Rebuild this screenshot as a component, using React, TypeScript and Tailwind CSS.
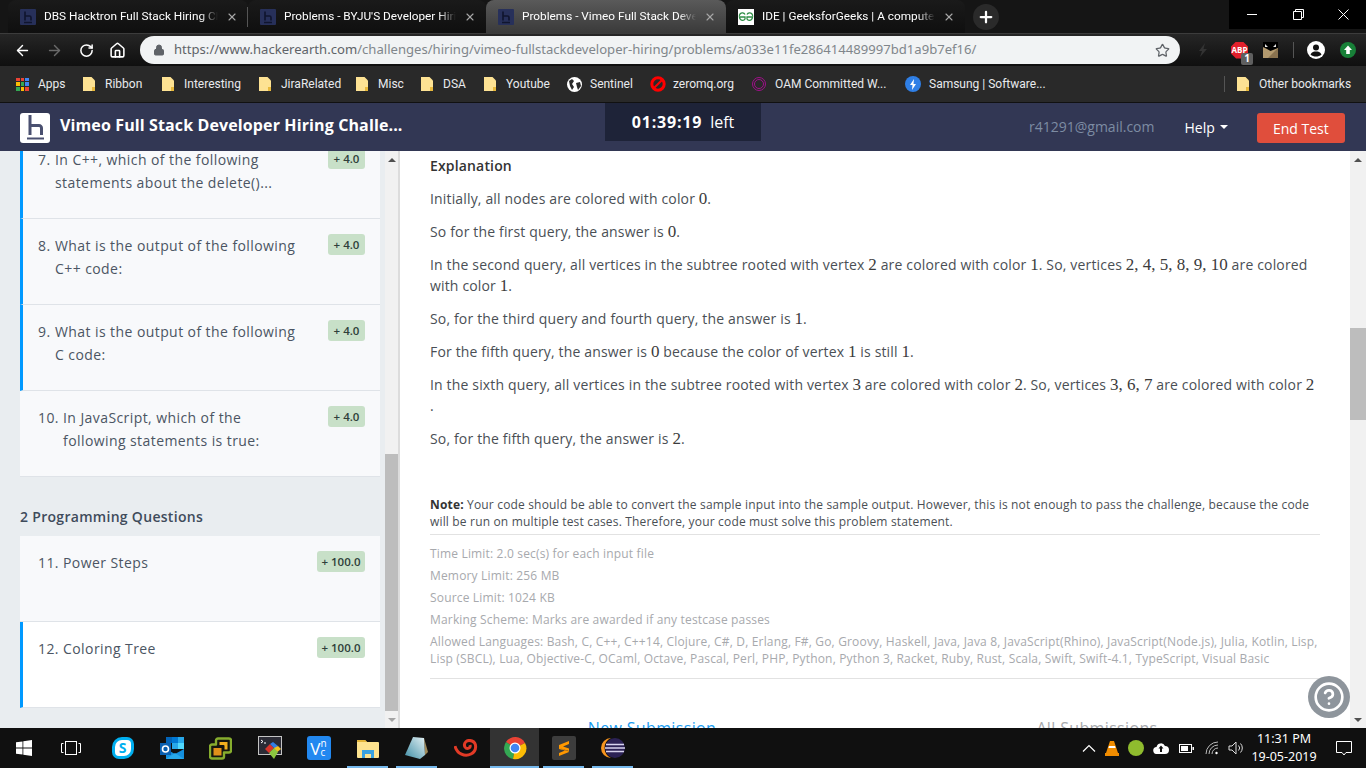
import { ReactNode } from "react";
import { ArrowLeft, ArrowRight, RotateCw, Home, Lock, Star, X, Plus, HelpCircle } from "lucide-react";

const folder = (
  <svg width="12" height="14" viewBox="0 0 12 14" className="shrink-0">
    <path d="M0 0h8.500l3.500 3.500V14H0z" fill="#fde293" />
    <path d="M9 10h3v4H9z" fill="#e8b93c" />
  </svg>
);

// favicon of hackerearth, dark square with h
function HeFavicon() {
  return (
    <svg width="16" height="16" viewBox="0 0 16 16" className="shrink-0">
      <rect width="16" height="16" rx="1" fill="#27305a" />
      <path d="M5 2.500v9M5 7h4.500a1.500 1.500 0 0 1 1.500 1.500v3M4 13.500h8" stroke="#10152e" strokeWidth="1.600" fill="none" />
    </svg>
  );
}

function GfgFavicon() {
  return (
    <svg width="16" height="16" viewBox="0 0 16 16" className="shrink-0">
      <rect width="16" height="16" fill="#fff" />
      <path d="M7 5.500C6 3.600 3.600 3.300 2.200 4.800.9 6.300 1.200 9 2.500 10.500c1.400 1.400 3.500 1.200 4.500-.5V8H2M9 5.500c1-1.900 3.400-2.200 4.800-.7 1.300 1.500 1 4.200-.3 5.700-1.400 1.400-3.500 1.200-4.500-.5V8h5" fill="none" stroke="#2f8d46" strokeWidth="1.300" />
    </svg>
  );
}

type TabProps = { title: string; active?: boolean; width: string; icon: ReactNode; divider?: boolean };

function Tab({ title, active, width, icon, divider }: TabProps) {
  return (
    <div className={`relative flex h-[33px] items-center gap-[8px] rounded-t-[8px] pl-[12px] pr-[10px] ${width} ${active ? "bg-gradient-to-b from-[#5a5a5a] to-[#3a3a3a]" : "bg-gradient-to-b from-[#1a1a1a] to-[#0f0f0f]"}`}>
      {icon}
      <span className="flex-1 overflow-hidden text-[11.8px] whitespace-nowrap text-white [mask-image:linear-gradient(to_right,black_90%,transparent)]">{title}</span>
      <X size={12} strokeWidth={2.2} className="shrink-0 text-[#a8a8a8]" />
      {divider && <div className="absolute top-[7px] right-0 h-[20px] w-px bg-[#555]" />}
    </div>
  );
}

type BookmarkProps = { label: string; width: string; icon: ReactNode; gap?: string };

function Bookmark({ label, width, icon, gap = "gap-[10px]" }: BookmarkProps) {
  return (
    <div className={`flex shrink-0 items-center text-[12px] whitespace-nowrap text-[#e8eaed] ${gap} ${width}`}>
      {icon}
      <span>{label}</span>
    </div>
  );
}

function AppsGrid() {
  const colors = ["#ea4335", "#ea4335", "#4285f4", "#fbbc05", "#34a853", "#4285f4", "#34a853", "#fbbc05", "#ea4335"];
  return (
    <div className="grid h-[13px] w-[13px] shrink-0 grid-cols-3 gap-px">
      {colors.map((c, i) => (
        <div key={i} style={{ backgroundColor: c }} />
      ))}
    </div>
  );
}

function Scrollbar({ before, thumb, className, downArrow }: { before: string; thumb: string; className: string; downArrow: string }) {
  return (
    <div className={`flex flex-col bg-[#f1f1f1] ${className}`}>
      <div className="flex h-[17px] shrink-0 items-center justify-center">
        <div className="h-0 w-0 border-x-[4px] border-b-[4px] border-x-transparent border-b-[#505050]" />
      </div>
      <div className={`shrink-0 ${before}`} />
      <div className={`shrink-0 bg-[#bdbdbd] ${thumb}`} />
      <div className="flex-1" />
      <div className="flex h-[17px] shrink-0 items-center justify-center">
        <div className={`h-0 w-0 border-x-[4px] border-t-[4px] border-x-transparent ${downArrow}`} />
      </div>
    </div>
  );
}

type QuestionProps = { num: string; lines: [string, string?]; marks: string; indent: string; plain?: boolean; white?: boolean; badgeWidth?: string };

function Question({ num, lines, marks, indent, plain, white, badgeWidth = "w-[37px]" }: QuestionProps) {
  return (
    <div className={`flex h-[86px] border-b border-[#dfe3e8] pt-[15px] pr-[15px] ${plain ? "pl-[18px]" : "border-l-[3px] border-l-[#0099ff] pl-[15px]"} ${white ? "bg-white" : "bg-[#f8f9fb]"}`}>
      <div className="flex flex-1 text-[14px] leading-[23px] tracking-[0.42px] text-[#4b5563]">
        <span className={`shrink-0 ${indent}`}>{num}</span>
        <div>
          <div>{lines[0]}</div>
          {lines[1] && <div>{lines[1]}</div>}
        </div>
      </div>
      <div className={`flex h-[21px] shrink-0 items-center justify-center rounded-[3px] bg-[#c8e0c8] pt-px text-[11.5px] font-semibold text-[#2f3f3a] ${badgeWidth}`}>{marks}</div>
    </div>
  );
}

const M = ({ children }: { children: ReactNode }) => (
  <span className="font-['Liberation_Serif',serif] text-[17px] tracking-normal text-[#3b3b3b]">{children}</span>
);

const languages =
  "Allowed Languages: Bash, C, C++, C++14, Clojure, C#, D, Erlang, F#, Go, Groovy, Haskell, Java, Java 8, JavaScript(Rhino), JavaScript(Node.js), Julia, Kotlin, Lisp, Lisp (SBCL), Lua, Objective-C, OCaml, Octave, Pascal, Perl, PHP, Python, Python 3, Racket, Ruby, Rust, Scala, Swift, Swift-4.1, TypeScript, Visual Basic";

function TaskIcon({ children, width = "w-[49px]", lit, active }: { children: ReactNode; width?: string; lit?: boolean; active?: boolean }) {
  return (
    <div className={`relative flex h-[40px] shrink-0 items-center justify-center ${width} ${active ? "bg-[#333]" : ""}`}>
      {children}
      {lit && <div className={`absolute bottom-0 h-[2px] bg-[#76b9ed] ${active ? "inset-x-0" : "inset-x-[4px]"}`} />}
    </div>
  );
}

export default function App() {
  return (
    <div className="relative flex h-[768px] w-[1366px] flex-col overflow-hidden bg-white font-['Open_Sans',sans-serif]">
      {/* tab strip */}
      <div className="flex h-[33px] shrink-0 bg-[#151515] pl-[8px] font-['Roboto',sans-serif]">
        <Tab title="DBS Hacktron Full Stack Hiring Ch" width="w-[240px]" icon={<HeFavicon />} divider />
        <Tab title="Problems - BYJU'S Developer Hirin" width="w-[238px]" icon={<HeFavicon />} />
        <Tab title="Problems - Vimeo Full Stack Devel" width="w-[240px]" icon={<HeFavicon />} active />
        <Tab title="IDE | GeeksforGeeks | A computer" width="w-[239px]" icon={<GfgFavicon />} />
        <div className="ml-[1px] flex h-[33px] w-[40px] items-center justify-center">
          <div className="flex h-[26px] w-[26px] items-center justify-center rounded-full bg-[#2a2a2a]">
            <Plus size={18} strokeWidth={3} className="text-white" />
          </div>
        </div>
        <div className="flex-1" />
        <div className="flex h-[29px] w-[137px] items-center bg-black">
          <div className="flex w-[46px] justify-center">
            <svg width="10" height="1"><rect width="10" height="1" fill="#fff" /></svg>
          </div>
          <div className="flex w-[46px] justify-center">
            <svg width="11" height="11" viewBox="0 0 11 11" fill="none" stroke="#fff"><path d="M.5 2.500h8v8h-8zM2.500 2.500v-2h8v8h-2" /></svg>
          </div>
          <div className="flex w-[45px] justify-center">
            <svg width="11" height="11" viewBox="0 0 11 11" fill="none" stroke="#fff"><path d="M.5.500l10 10M10.500.500l-10 10" /></svg>
          </div>
        </div>
      </div>

      {/* toolbar */}
      <div className="flex h-[33px] shrink-0 items-center border-t border-[#3c3c3c] bg-gradient-to-b from-[#262626] to-[#0f0f0f] pl-[14px]">
        <ArrowLeft size={17} strokeWidth={2} className="text-white" />
        <ArrowRight size={17} strokeWidth={2} className="ml-[15px] text-[#6a6a6a]" />
        <RotateCw size={15} strokeWidth={2.4} className="ml-[16px] text-white" />
        <Home size={17} strokeWidth={2.2} className="ml-[15px] text-white" />
        <div className="ml-[14px] flex h-[28px] w-[1040px] items-center rounded-full bg-[#f1f3f4] pr-[10px] pl-[13px] font-['Noto_Sans',sans-serif] text-[13.1px]">
          <Lock size={12} fill="#5f6368" className="text-[#5f6368]" />
          <span className="ml-[9px] text-[#5f6368]">https://www.hackerearth.com</span>
          <span className="text-[#80868b]">/challenges/hiring/vimeo-fullstackdeveloper-hiring/problems/a033e11fe286414489997bd1a9b7ef16/</span>
          <div className="flex-1" />
          <Star size={15} strokeWidth={2} className="text-[#5f6368]" />
        </div>
        <svg width="10" height="14" viewBox="0 0 10 14" className="ml-[18px]"><path d="M7 0 1 8h3l-2 6 7-8H5.500z" fill="#333" /></svg>
        <div className="relative ml-[23px] flex h-[17px] w-[17px] items-center justify-center bg-[#e2202c] text-[8px] font-bold text-white [clip-path:polygon(30%_0,70%_0,100%_30%,100%_70%,70%_100%,30%_100%,0_70%,0_30%)]">
          ABP
        </div>
        <div className="relative -ml-[7px] mt-[17px] flex h-[12px] w-[12px] shrink-0 items-center justify-center rounded-[2px] bg-[#5f5f5f] text-[10px] font-bold text-white">1</div>
        <svg width="15" height="16" viewBox="0 0 15 16" className="ml-[10px]">
          <rect width="15" height="16" fill="#000" />
          <path d="M0 5l4 2 3.500 2 7.500-3v10H0z" fill="#b39a6f" />
          <path d="M15 6v10H5z" fill="#8a7350" />
          <path d="M2 2l3 3H2zM13 2l-3 3h3z" fill="#e8e8e8" />
        </svg>
        <div className="ml-[15px] h-[16px] w-px bg-[#555]" />
        <svg width="18" height="18" viewBox="0 0 18 18" className="ml-[13px]">
          <circle cx="9" cy="9" r="9" fill="#fff" />
          <circle cx="9" cy="6.500" r="3" fill="#111" />
          <path d="M3.500 13.500c1-2.500 3.500-3 5.500-3s4.500.5 5.500 3c-1.500 1.500-3.500 2-5.500 2s-4-.5-5.500-2z" fill="#111" />
        </svg>
        <svg width="16" height="16" viewBox="0 0 16 16" className="ml-[15px]">
          <circle cx="8" cy="8" r="8" fill="#188038" />
          <path d="M8 3.500 12 8H9.800v4H6.200V8H4z" fill="#fff" />
        </svg>
      </div>

      {/* bookmarks */}
      <div className="flex h-[37px] shrink-0 items-center border-b border-[#111] bg-[#292929] pl-[16px] font-['Roboto',sans-serif]">
        <Bookmark label="Apps" width="w-[67px]" icon={<AppsGrid />} gap="gap-[9px]" />
        <Bookmark label="Ribbon" width="w-[79px]" icon={folder} />
        <Bookmark label="Interesting" width="w-[97px]" icon={folder} />
        <Bookmark label="JiraRelated" width="w-[97px]" icon={folder} />
        <Bookmark label="Misc" width="w-[65px]" icon={folder} />
        <Bookmark label="DSA" width="w-[63px]" icon={folder} />
        <Bookmark label="Youtube" width="w-[83px]" icon={folder} />
        <Bookmark
          label="Sentinel"
          width="w-[83px]"
          gap="gap-[8px]"
          icon={
            <svg width="15" height="15" viewBox="0 0 15 15">
              <circle cx="7.500" cy="7.500" r="7.500" fill="#fff" />
              <path d="M2 4l3-2 2 2-2 3 2 3-2 3-2-4zM9 6l4-1 1 4-3 4-1-3z" fill="#292929" />
            </svg>
          }
        />
        <Bookmark
          label="zeromq.org"
          width="w-[102px]"
          gap="gap-[7px]"
          icon={
            <svg width="16" height="16" viewBox="0 0 16 16">
              <circle cx="8" cy="8" r="6.200" fill="none" stroke="#f00" strokeWidth="3" />
              <path d="M3 13 13 3" stroke="#f00" strokeWidth="2" />
            </svg>
          }
        />
        <Bookmark
          label="OAM Committed W..."
          width="w-[153px]"
          gap="gap-[9px]"
          icon={<div className="h-[14px] w-[14px] rounded-full border-[3px] border-double border-[#a0108a]" />}
        />
        <Bookmark
          label="Samsung | Software..."
          width="w-[319px]"
          gap="gap-[8px]"
          icon={
            <div className="flex h-[16px] w-[16px] items-center justify-center rounded-full bg-[#2f7fe6]">
              <svg width="8" height="11" viewBox="0 0 8 11"><path d="M5 0 1 6h2.500L3 11l4-6H4.500z" fill="#fff" /></svg>
            </div>
          }
        />
        <div className="h-[16px] w-px bg-[#555]" />
        <Bookmark label="Other bookmarks" width="ml-[12px] w-[120px]" icon={folder} />
      </div>

      {/* app header */}
      <div className="relative z-10 flex h-[48px] shrink-0 bg-[#323754]">
        <svg width="30" height="30" viewBox="0 0 30 30" className="mt-[10px] ml-[20px] shrink-0">
          <rect width="30" height="30" rx="3" fill="#fff" />
          <path d="M10 2v20M10 12.500h9a2.500 2.500 0 0 1 2.500 2.500v7" fill="none" stroke="#4a5070" strokeWidth="3" />
          <path d="M7 25.500h17" stroke="#4a5070" strokeWidth="2" />
        </svg>
        <div className="ml-[10px] w-[545px] pt-[8px] text-[16px] leading-[28px] font-bold tracking-[0.12px] whitespace-nowrap text-white">Vimeo Full Stack Developer Hiring Challe...</div>
        <div className="flex h-[38px] w-[156px] items-center justify-center gap-[8px] bg-[#1e2338] text-[16px] text-white">
          <span className="font-bold tracking-[0.8px]">01:39:19</span>
          <span>left</span>
        </div>
        <div className="ml-[268px] pt-[14px] text-[14px] leading-[20px] text-[#7d8ca3]">r41291@gmail.com</div>
        <div className="ml-[30px] flex h-[48px] items-center gap-[5px] text-[14px] text-white">
          <span>Help</span>
          <div className="h-0 w-0 border-x-[4px] border-t-[4px] border-x-transparent border-t-white" />
        </div>
        <div className="mt-[10px] ml-[29px] flex h-[30px] w-[88px] items-center justify-center rounded-[3px] bg-[#e04e3c] text-[14px] text-white">End Test</div>
      </div>

      {/* body */}
      <div className="flex min-h-0 flex-1">
        <div className="flex w-[400px] shrink-0 bg-[#e9edf0]">
          <div className="w-[380px] shrink-0 overflow-hidden pl-[20px]">
            <div className="-mt-[18px]">
              <Question num="7." indent="w-[17px]" lines={["In C++, which of the following", "statements about the delete()..."]} marks="+ 4.0" />
              <Question num="8." indent="w-[17px]" lines={["What is the output of the following", "C++ code:"]} marks="+ 4.0" />
              <Question num="9." indent="w-[17px]" lines={["What is the output of the following", "C code:"]} marks="+ 4.0" />
              <Question num="10." indent="w-[25px]" lines={["In JavaScript, which of the", "following statements is true:"]} marks="+ 4.0" plain />
            </div>
            <div className="pt-[30px] pb-[9px] text-[14px] leading-[20px] font-semibold tracking-[0.3px] text-[#3f4b5b]">2 Programming Questions</div>
            <Question num="11." indent="w-[25px]" lines={["Power Steps"]} marks="+ 100.0" plain badgeWidth="w-[48px]" />
            <Question num="12." indent="w-[25px]" lines={["Coloring Tree"]} marks="+ 100.0" white badgeWidth="w-[48px]" />
          </div>
          <div className="w-[5px] shrink-0" />
          <Scrollbar className="w-[15px] shrink-0 border-r-2 border-[#dcdcdc]" before="h-[286px]" thumb="h-[257px]" downArrow="border-t-[#a3a3a3]" />
        </div>

        <div className="w-[950px] shrink-0 overflow-hidden px-[30px] text-[14px] leading-[21px] tracking-[0.16px] text-[#4a4f55]">
          <div className="w-[890px] pt-[4px]">
            <p className="mb-[12px] font-semibold text-[#333]">Explanation</p>
            <p className="mb-[12px]">Initially, all nodes are colored with color <M>0</M>.</p>
            <p className="mb-[12px]">So for the first query, the answer is <M>0</M>.</p>
            <p className="mb-[12px]">In the second query, all vertices in the subtree rooted with vertex <M>2</M> are colored with color <M>1</M>. So, vertices <M>2, 4, 5, 8, 9, 10</M> are colored with color <M>1</M>.</p>
            <p className="mb-[12px]">So, for the third query and fourth query, the answer is <M>1</M>.</p>
            <p className="mb-[12px]">For the fifth query, the answer is <M>0</M> because the color of vertex <M>1</M> is still <M>1</M>.</p>
            <p className="mb-[12px]">In the sixth query, all vertices in the subtree rooted with vertex <M>3</M> are colored with color <M>2</M>. So, vertices <M>3, 6, 7</M> are colored with color <M>2</M><br />.</p>
            <p>So, for the fifth query, the answer is <M>2</M>.</p>

            <p className="mt-[47px] border-b border-[#e2e2e2] pb-[4px] text-[12px] leading-[17px] tracking-[0.17px] text-[#4a4f55]">
              <span className="font-bold text-[#333]">Note:</span> Your code should be able to convert the sample input into the sample output. However, this is not enough to pass the challenge, because the code will be run on multiple test cases. Therefore, your code must solve this problem statement.
            </p>
            <div className="border-b border-[#e2e2e2] pt-[10px] pb-[11px] text-[12px] leading-[17px] tracking-[0.17px] text-[#a7a9ad]">
              <p className="mb-[5px]">Time Limit: 2.0 sec(s) for each input file</p>
              <p className="mb-[5px]">Memory Limit: 256 MB</p>
              <p className="mb-[5px]">Source Limit: 1024 KB</p>
              <p className="mb-[5px]">Marking Scheme: Marks are awarded if any testcase passes</p>
              <p>{languages}</p>
            </div>
            <div className="flex pt-[38px] text-[16px] leading-[22px] tracking-[0.35px]">
              <div className="w-[444px] text-center text-[#1a9cf0]">New Submission</div>
              <div className="w-[446px] text-center text-[#a7a9ad]">All Submissions</div>
            </div>
          </div>
        </div>
        <Scrollbar className="w-[16px] shrink-0" before="h-[160px]" thumb="h-[92px]" downArrow="border-t-[#505050]" />
      </div>

      {/* help bubble */}
      <div className="absolute top-[676px] left-[1308px] flex h-[42px] w-[42px] items-center justify-center rounded-full bg-[#8e959c]">
        <HelpCircle size={32} strokeWidth={2} className="text-white" />
      </div>

      {/* taskbar */}
      <div className="flex h-[40px] shrink-0 items-center bg-[#101010]">
        <TaskIcon width="w-[48px]">
          <svg width="16" height="16" viewBox="0 0 16 16"><path d="M0 2.300 6.500 1.400V7.600H0zM7.300 1.300 16 0V7.600H7.300zM0 8.400H6.500V14.600L0 13.700zM7.300 8.400H16V16L7.300 14.700z" fill="#fff" /></svg>
        </TaskIcon>
        <TaskIcon width="w-[46px]">
          <svg width="20" height="14" viewBox="0 0 20 14" fill="none" stroke="#fff"><rect x="4.500" y="0.500" width="11" height="13" /><path d="M2.500 2.500h-2v9h2M17.500 2.500h2v9h-2" /></svg>
        </TaskIcon>
        <div className="w-[4px] shrink-0" />
        <TaskIcon>
          <div className="flex h-[22px] w-[22px] items-center justify-center rounded-tl-[10px] rounded-tr-[7px] rounded-br-[10px] rounded-bl-[7px] border-[3px] border-[#00aff0] bg-white text-[14px] leading-none font-bold text-[#00aff0]">S</div>
        </TaskIcon>
        <TaskIcon>
          <svg width="24" height="22" viewBox="0 0 24 22">
            <path d="M6 0h6v6H6z" fill="#0364b8" />
            <path d="M12 0h6v6h-6z" fill="#0078d4" />
            <path d="M18 0h6v6h-6z" fill="#28a8ea" />
            <path d="M12 6h6v6h-6z" fill="#28a8ea" />
            <path d="M18 6h6v6h-6z" fill="#50d9ff" />
            <path d="M6 12 15 17l9-5v10H6z" fill="#1490df" />
            <path d="M6 22 15 16l9 6z" fill="#28a8ea" />
            <rect x="0" y="6" width="11" height="12" fill="#0a5fb0" />
            <circle cx="5.500" cy="12" r="3" fill="none" stroke="#fff" strokeWidth="1.600" />
          </svg>
        </TaskIcon>
        <TaskIcon>
          <svg width="23" height="23" viewBox="0 0 23 23">
            <path d="M9 1.500h11a2 2 0 0 1 2 2v10a2 2 0 0 1-2 2h-5v4a2 2 0 0 1-2 2H3a2 2 0 0 1-2-2v-10a2 2 0 0 1 2-2h4v-4a2 2 0 0 1 2-2z" fill="#15170f" stroke="#86ad2e" strokeWidth="2.400" strokeLinejoin="round" />
            <path d="M10.500 5h8v7.500h-3V9a1 1 0 0 0-1-1h-4z" fill="#f2b01e" />
            <path d="M4.500 11h8v7.500h-8z" fill="#e0901a" />
          </svg>
        </TaskIcon>
        <TaskIcon>
          <svg width="24" height="24" viewBox="0 0 24 24">
            <rect x="0.500" y="0.500" width="23" height="18" fill="#2b2b35" stroke="#c4c4c4" />
            <path d="M3 4l2 1.500L3 7M6 7h2" stroke="#fff" fill="none" />
            <path d="M7 13l5-5 4 4-5 5z" fill="#d9342b" />
            <path d="M12 8l3-2 5 4-3 3z" fill="#2f7fe6" />
            <path d="M16 12l4-2 3 3-5 4z" fill="#f2c11e" />
            <path d="M11 17l5-5 4 4-4 7z" fill="#8cc63f" />
          </svg>
        </TaskIcon>
        <TaskIcon>
          <div className="flex h-[24px] w-[24px] items-center justify-center rounded-[3px] bg-[#2288f0] leading-none text-white">
            <span className="text-[17px]">V</span>
            <span className="flex flex-col text-[10px] leading-[9px]">
              <span>n</span>
              <span>c</span>
            </span>
          </div>
        </TaskIcon>
        <TaskIcon lit>
          <svg width="22" height="19" viewBox="0 0 22 19">
            <path d="M0 2a1 1 0 0 1 1-1h7l2 2h11a1 1 0 0 1 1 1v14a1 1 0 0 1-1 1H1a1 1 0 0 1-1-1z" fill="#fde38f" />
            <path d="M0 2a1 1 0 0 1 1-1h7l2 2H0z" fill="#e3b53a" />
            <path d="M5 19v-8h12v8h-3v-4H8v4z" fill="#3aa2e0" />
          </svg>
        </TaskIcon>
        <TaskIcon lit>
          <svg width="23" height="22" viewBox="0 0 23 22">
            <defs>
              <linearGradient id="pad" x1="0" y1="1" x2="1" y2="0">
                <stop offset="0" stopColor="#3f8ea6" />
                <stop offset="1" stopColor="#e4f1f4" />
              </linearGradient>
            </defs>
            <path d="M19 1l4 14-3 3z" fill="#a08a5a" />
            <path d="M8 0l11 1 1 17-5 4-15-4z" fill="url(#pad)" />
          </svg>
        </TaskIcon>
        <TaskIcon>
          <svg width="24" height="19" viewBox="0 0 24 19" fill="none">
            <path d="M1 7c2 8 10 11 16 8 6-3 6-11 1-13C13 0 9 4 11 8c2 3 6 1 5-2" stroke="#e23a26" strokeWidth="3" />
          </svg>
        </TaskIcon>
        <TaskIcon lit active>
          <svg width="24" height="24" viewBox="0 0 24 24">
            <path d="M12 12 3 6a11 11 0 0 1 19 1z" fill="#ea4335" />
            <path d="M12 12 3 6a11 11 0 0 0 7 17z" fill="#34a853" />
            <path d="M12 12 22 7a11 11 0 0 1-12 16z" fill="#fbbc05" />
            <circle cx="12" cy="12" r="5.500" fill="#fff" />
            <circle cx="12" cy="12" r="4.300" fill="#4285f4" />
          </svg>
        </TaskIcon>
        <TaskIcon lit>
          <div className="flex h-[24px] w-[24px] items-center justify-center rounded-[2px] bg-[#3d3d3d]">
            <svg width="12" height="16" viewBox="0 0 12 16"><path d="M11 1 1 5v3l10 3.500V8.500L5 6.500l6-2.500zM1 8l10 3v1L1 16v-3l6-2.500L1 9z" fill="#ff9800" /></svg>
          </div>
        </TaskIcon>
        <TaskIcon lit>
          <svg width="24" height="24" viewBox="0 0 24 24">
            <path d="M10 2a10 10 0 0 0 0 20 11 11 0 0 1 0-20z" fill="#f7941e" />
            <circle cx="14" cy="12" r="10" fill="#2c2255" />
            <path d="M5 8.500h18M4 12h20M5 15.500h18" stroke="#d8d4ee" strokeWidth="1.500" />
          </svg>
        </TaskIcon>

        <div className="flex-1" />

        <div className="flex items-center text-white">
          <svg width="14" height="8" viewBox="0 0 14 8" fill="none" stroke="#fff" strokeWidth="1.200"><path d="M1 7.500 7 1.500l6 6" /></svg>
          <svg width="14" height="16" viewBox="0 0 14 16" className="ml-[9px]"><path d="M5 1h4l4 12H1z" fill="#f08c00" /><path d="M4 6h6l.6 2H3.400z" fill="#fff" /><path d="M0 13h14v3H0z" fill="#f08c00" /></svg>
          <div className="ml-[9px] h-[16px] w-[16px] rounded-full bg-[#8fbc2e]" />
          <svg width="16" height="12" viewBox="0 0 16 12" className="ml-[9px]"><path d="M4 12a3.500 3.500 0 0 1-.5-7 4.500 4.500 0 0 1 8.500-1 4 4 0 0 1 0 8z" fill="#fff" /><path d="M8 3.500 5.500 6.500h1.500V10h2V6.500h1.500z" fill="#101010" /></svg>
          <svg width="15" height="9" viewBox="0 0 15 9" className="ml-[10px]"><rect x="0.500" y="0.500" width="12" height="8" fill="none" stroke="#fff" /><rect x="2" y="2" width="7" height="5" fill="#fff" /><rect x="13.500" y="3" width="1.500" height="3" fill="#fff" /></svg>
          <svg width="14" height="14" viewBox="0 0 14 14" fill="none" stroke="#bbb" className="ml-[11px]"><path d="M1 13A12 12 0 0 1 13 1M4 13a9 9 0 0 1 9-9M7 13a6 6 0 0 1 6-6" /><circle cx="11.500" cy="12" r="1.200" fill="#fff" stroke="none" /></svg>
          <svg width="16" height="14" viewBox="0 0 16 14" fill="none" stroke="#ddd" className="ml-[9px]"><path d="M1 5h3l4-4v12L4 9H1zM10.500 4.500a3.500 3.500 0 0 1 0 5M12.500 2.500a6.500 6.500 0 0 1 0 9" /></svg>
        </div>
        <div className="ml-[11px] flex w-[58px] flex-col items-center font-['Noto_Sans',sans-serif] text-[12.5px] leading-[18px] whitespace-nowrap text-white">
          <span>11:31 PM</span>
          <span>19-05-2019</span>
        </div>
        <svg width="16" height="16" viewBox="0 0 16 16" fill="none" stroke="#fff" className="mr-[14px] ml-[23px]"><path d="M.5 1.500h15v11h-5.500L8 15l-2-2.500H.5z" /></svg>
      </div>
    </div>
  );
}
